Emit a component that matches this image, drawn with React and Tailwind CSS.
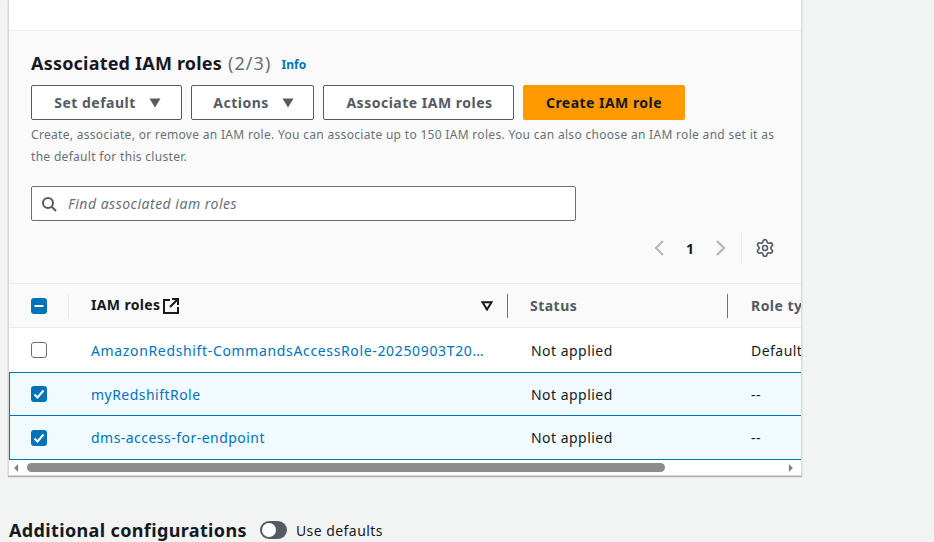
import React from "react";
import { Settings } from "lucide-react";

const Caret = ({ className }) => (
  <svg viewBox="0 0 12 10" className={className}>
    <path d="M0.5 0.5h11L6 9.5z" fill="#545b64" />
  </svg>
);

const Checkbox = ({ state }) => {
  if (state === "none") {
    return <div className="h-[16px] w-[16px] rounded-[3px] border border-[#687078] bg-white" />;
  }
  return (
    <div className="flex h-[16px] w-[16px] items-center justify-center rounded-[3px] bg-[#0073bb]">
      {state === "some" ? (
        <svg viewBox="0 0 16 16" className="h-4 w-4">
          <path d="M3.5 8h9" stroke="#fff" strokeWidth="2" fill="none" />
        </svg>
      ) : (
        <svg viewBox="0 0 16 16" className="h-4 w-4">
          <path d="M3.5 8.5l3 3 6-7" stroke="#fff" strokeWidth="2" fill="none" />
        </svg>
      )}
    </div>
  );
};

const Row = ({ name, type, selected, height, nameClass }) => (
  <div
    className={`flex ${height} items-center text-[14px] tracking-[0.47px] ${
      selected ? "border-t border-[#0073bb] bg-[#f1faff] shadow-[inset_1px_0_0_#0073bb]" : "bg-white"
    }`}
  >
    <div className="flex w-[60px] shrink-0 justify-center">
      <Checkbox state={selected ? "all" : "none"} />
    </div>
    <div className="w-[439px] shrink-0 pl-[22px] pr-[20px]">
      <div className={`truncate text-[#0073bb] ${nameClass}`}>{name}</div>
    </div>
    <div className="w-[220px] shrink-0 pl-[23px] text-[#16191f]">Not applied</div>
    <div className="shrink-0 pl-[23px] whitespace-nowrap text-[#16191f]">{type}</div>
  </div>
);

const OutlineButton = ({ children, width }) => (
  <button className={`flex h-[35px] ${width} items-center justify-center gap-[13px] rounded-[2px] border border-[#545b64] bg-white pl-[2px] text-[14px] font-bold tracking-[0.5px] text-[#545b64]`}>
    {children}
  </button>
);

export default function App() {
  return (
    <div className="h-[542px] w-[934px] overflow-hidden bg-[#f2f3f3] pl-[8px] font-['Noto_Sans',sans-serif]">
      <div className="w-[794px] border-b border-l border-r border-[#d5dbdb] bg-white shadow-[0_1px_1px_rgba(0,28,36,0.3)]">
        <div className="h-[31px] border-b border-[#eaeded]" />

        <div className="bg-[#fafafa] pb-[17px] pl-[22px] pr-[20px] pt-[19px]">
          <div className="flex h-[26px] items-center">
            <h2 className="text-[18px] font-bold tracking-[0.2px] text-[#16191f]">
              Associated IAM roles <span className="ml-[1px] font-normal tracking-[1.1px] text-[#687078]">(2/3)</span>
            </h2>
            <a className="ml-[10px] mt-[3px] text-[12px] font-bold text-[#0073bb]">Info</a>
          </div>
          <div className="mt-[9px] flex gap-[9px]">
            <OutlineButton width="w-[151px]">
              Set default <Caret className="h-[10px] w-[12px]" />
            </OutlineButton>
            <OutlineButton width="w-[123px]">
              Actions <Caret className="h-[10px] w-[12px]" />
            </OutlineButton>
            <OutlineButton width="w-[191px]">Associate IAM roles</OutlineButton>
            <button className="h-[35px] w-[162px] rounded-[2px] bg-[#ff9900] text-[14px] font-bold tracking-[0.47px] text-[#16191f]">
              Create IAM role
            </button>
          </div>
          <p className="mt-[4px] text-[12px] leading-[22px] tracking-[0.31px] text-[#687078]">
            Create, associate, or remove an IAM role. You can associate up to 150 IAM roles. You can also choose an IAM role and set it as the default for this cluster.
          </p>
          <div className="mt-[18px] flex h-[35px] w-[545px] items-center rounded-[2px] border border-[#687078] bg-white pl-[9px]">
            <svg viewBox="0 0 16 16" className="h-[16px] w-[16px]" fill="none" stroke="#545b64" strokeWidth="2">
              <circle cx="7" cy="7" r="5" />
              <path d="M10.5 10.5l4.5 4.5" />
            </svg>
            <span className="ml-[11px] text-[14px] italic tracking-[0.5px] text-[#687078]">Find associated iam roles</span>
          </div>
          <div className="mt-[9px] flex h-[36px] items-center justify-end">
            <svg viewBox="0 0 10 16" className="h-[16px] w-[10px]" fill="none" stroke="#aab7b8" strokeWidth="2">
              <path d="M9 1L2 8l7 7" />
            </svg>
            <span className="ml-[22px] text-[14px] font-bold text-[#16191f]">1</span>
            <svg viewBox="0 0 10 16" className="ml-[22px] h-[16px] w-[10px]" fill="none" stroke="#aab7b8" strokeWidth="2">
              <path d="M1 1l7 7-7 7" />
            </svg>
            <div className="ml-[15px] h-[34px] w-px bg-[#eaeded]" />
            <Settings className="ml-[13px] mr-[6px] h-[20px] w-[20px] text-[#545b64]" strokeWidth={2} />
          </div>
        </div>

        <div className="overflow-hidden">
          <div className="w-[900px]">
            <div className="flex h-[45px] items-center border-b border-t border-[#eaeded] bg-[#fafafa] text-[14px] font-bold tracking-[0.47px]">
              <div className="flex h-[24px] w-[60px] shrink-0 items-center justify-center border-r border-[#eaeded]">
                <Checkbox state="some" />
              </div>
              <div className="flex h-[24px] w-[439px] shrink-0 items-center justify-between border-r border-[#687078] pl-[22px] pr-[14px] text-[#16191f]">
                <span className="flex items-center gap-[3px]">
                  <span className="mb-[2px] tracking-[0.35px]">IAM roles</span>
                  <svg viewBox="0 0 16 16" className="h-[16px] w-[16px]" fill="none" stroke="#16191f" strokeWidth="2">
                    <path d="M7 2H1v13h14V9M9 1h6v6M15 1L7 9" />
                  </svg>
                </span>
                <svg viewBox="0 0 12 10" className="h-[10px] w-[12px]" fill="none" stroke="#16191f" strokeWidth="2">
                  <path d="M1.5 1.2h9L6 8.5z" />
                </svg>
              </div>
              <div className="flex h-[24px] w-[220px] shrink-0 items-center border-r border-[#687078] pl-[22px] text-[#545b64]">Status</div>
              <div className="shrink-0 pl-[23px] text-[#545b64]">Role type</div>
            </div>
            <Row name="AmazonRedshift-CommandsAccessRole-20250903T201530" type="Default" height="h-[44px]" nameClass="tracking-[0.65px]" />
            <Row name="myRedshiftRole" type="--" selected height="h-[43px]" />
            <Row name="dms-access-for-endpoint" type="--" selected height="h-[44px]" />
            <div className="h-px bg-[#0073bb]" />
          </div>
        </div>

        <div className="flex h-[15px] items-center bg-white">
          <svg viewBox="0 0 6 10" className="ml-[5px] h-[8px] w-[5px]"><path d="M5 0v10L0 5z" fill="#7f7f7f" /></svg>
          <div className="ml-[8px] h-[9px] w-[638px] rounded-full bg-[#8c8c8c]" />
          <svg viewBox="0 0 6 10" className="ml-[123px] h-[8px] w-[5px]"><path d="M1 0v10l5-5z" fill="#7f7f7f" /></svg>
        </div>
      </div>

      <div className="ml-[1px] mt-[41px] flex items-center">
        <h2 className="text-[18px] font-bold tracking-[0.36px] text-[#16191f]">Additional configurations</h2>
        <div className="mb-[2px] ml-[13px] flex h-[18px] w-[27px] items-center rounded-full bg-[#545b64] pl-[2px]">
          <div className="h-[14px] w-[14px] rounded-full bg-white" />
        </div>
        <span className="ml-[9px] text-[14px] tracking-[0.45px] text-[#16191f]">Use defaults</span>
      </div>
    </div>
  );
}
